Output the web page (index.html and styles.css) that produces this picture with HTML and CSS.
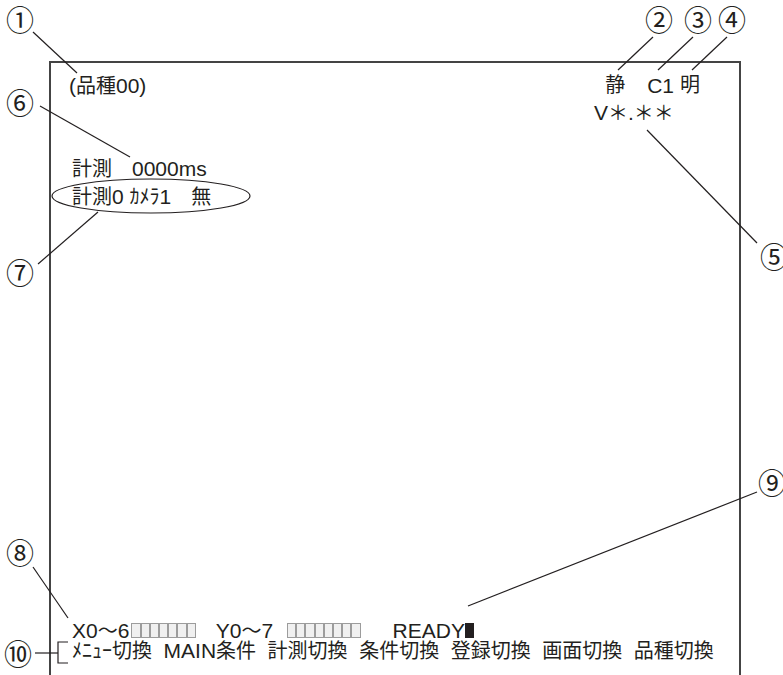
FILE: index.html
```html
<!DOCTYPE html>
<html lang="ja">
<head>
<meta charset="utf-8">
<title>画面表示</title>
<link rel="stylesheet" href="styles.css">
</head>
<body>
<div class="screen">
  <div class="top">
    <div class="kind"><span class="lat">(</span>品種<span class="lat">00)</span></div>
    <div class="status">
      <div class="flags"><span>静</span><span class="cam lat">C1</span><span class="light">明</span></div>
      <div class="ver"><span class="lat">V</span>＊<span class="lat">.</span>＊＊</div>
    </div>
  </div>
  <div class="meas">
    <div>計測　<span class="lat">0000ms</span></div>
    <div>計測<span class="lat">0 </span>ｶﾒﾗ<span class="lat">1</span>　無</div>
  </div>
  <div class="spacer"></div>
  <div class="io"><span class="lat">X0</span>～<span class="lat">6</span><span class="boxes x"><i></i><i></i><i></i><i></i><i></i><i></i><i></i></span><span class="y"><span class="lat">Y0</span>～<span class="lat">7</span></span><span class="boxes yb"><i></i><i></i><i></i><i></i><i></i><i></i><i></i><i></i></span><span class="ready lat">READY</span><span class="cursor"></span></div>
  <div class="menu">ﾒﾆｭｰ切換 <span class="lat">MAIN</span>条件 計測切換 条件切換 登録切換 画面切換 品種切換</div>
</div>
<svg class="notes" width="783" height="675" viewBox="0 0 783 675">
  <g class="leaders">
    <line x1="33" y1="32" x2="77" y2="73"/>
    <line x1="40" y1="106" x2="130" y2="157"/>
    <line x1="98" y1="212" x2="38" y2="264"/>
    <line x1="653" y1="37" x2="618" y2="70"/>
    <line x1="693" y1="37" x2="658" y2="70"/>
    <line x1="727" y1="37" x2="692" y2="70"/>
    <line x1="647" y1="130" x2="757" y2="243"/>
    <line x1="757" y1="492" x2="468" y2="606"/>
    <line x1="33" y1="567" x2="68" y2="618"/>
    <line x1="35" y1="653" x2="58" y2="653"/>
    <polyline points="68,642 58,642 58,663 68,663"/>
    <ellipse cx="151" cy="196" rx="99" ry="17"/>
  </g>
  <g class="nums">
    <text x="20" y="19">①</text>
    <text x="659" y="19">②</text>
    <text x="698" y="19">③</text>
    <text x="732" y="19">④</text>
    <text x="774" y="256">⑤</text>
    <text x="20" y="102">⑥</text>
    <text x="20" y="272">⑦</text>
    <text x="20" y="552">⑧</text>
    <text x="772" y="482">⑨</text>
    <text x="18" y="653">⑩</text>
  </g>
</svg>
</body>
</html>
```
FILE: styles.css
```css
body {
  margin: 0;
  width: 783px;
  height: 675px;
  overflow: hidden;
  position: relative;
  background: #ffffff;
  color: #231f20;
  font-family: "Liberation Sans", "Noto Sans CJK JP", sans-serif;
}

.screen {
  box-sizing: border-box;
  margin: 61px 0 0 49px;
  width: 692px;
  height: 614px;
  border: 2px solid #444444;
  border-bottom: none;
  display: flex;
  flex-direction: column;
  padding: 9px 0 14px 21px;
  font-size: 20px;
}

.lat {
  font-size: 21px;
}

.top {
  display: flex;
  justify-content: space-between;
  padding-right: 39px;
  line-height: 27px;
}

.kind {
  margin-left: -3px;
}

.status {
  width: 106px;
}

.flags {
  display: flex;
  justify-content: flex-end;
}

.cam {
  margin-left: 22px;
}

.light {
  margin-left: 6px;
}

.meas {
  margin-top: 28px;
  line-height: 27px;
}

.spacer {
  flex: 1;
}

.io,
.menu {
  line-height: 20px;
  white-space: nowrap;
}

.menu {
  word-spacing: 6px;
}

.boxes {
  display: inline-flex;
  vertical-align: baseline;
}

.boxes.x {
  margin-left: 2px;
}

.boxes.yb {
  margin-left: 14px;
}

.boxes i {
  display: inline-block;
  box-sizing: border-box;
  width: 9.2px;
  height: 15px;
  border: 1px solid #9c9c9c;
  background: #f0f0f0;
}

.y {
  margin-left: 20px;
}

.ready {
  margin-left: 32px;
}

.cursor {
  display: inline-block;
  width: 9px;
  height: 15px;
  background: #231f20;
}

.notes {
  position: absolute;
  top: 0;
  left: 0;
  pointer-events: none;
}

.leaders line,
.leaders polyline,
.leaders ellipse {
  stroke: #231f20;
  stroke-width: 1.2;
  fill: none;
}

.nums text {
  font-family: "Noto Sans CJK JP", sans-serif;
  font-size: 28px;
  text-anchor: middle;
  dominant-baseline: central;
  fill: #231f20;
}
```
